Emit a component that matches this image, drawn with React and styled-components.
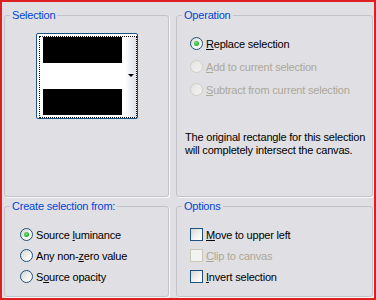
import React from 'react';
import styled, { createGlobalStyle } from 'styled-components';

const Global = createGlobalStyle`
  html, body { margin: 0; padding: 0; background: #e0dfe3; }
  body { font-family: "Liberation Sans", Arial, sans-serif; font-size: 11px; }
`;

const Dialog = styled.div`
  box-sizing: border-box;
  width: 376px;
  height: 300px;
  border: 2px solid #dd1f1f;
  background: #e0dfe3;
  padding: 7px 1px 1px 2px;
  display: grid;
  grid-template-columns: 165px 197px;
  grid-template-rows: 188px 97px;
  column-gap: 7px;
  row-gap: 3px;
  font-family: "Liberation Sans", Arial, sans-serif;
  font-size: 11px;
  letter-spacing: -0.2px;
  color: #000;
`;

const Group = styled.fieldset`
  margin: 0;
  padding: 0;
  min-width: 0;
  border: 1px solid #c3c3c9;
  border-radius: 3px;
  box-shadow: 1px 1px 0 #f7f7f9;
  display: flex;
  flex-direction: column;
`;

const Title = styled.legend`
  margin-left: 5px;
  padding: 0 2px;
  line-height: 13px;
  color: #0046d5;
`;

const Body = styled.div`
  display: flex;
  flex-direction: column;
  padding: ${p => p.$pad};
`;

const Preview = styled.div`
  align-self: center;
  margin-top: 11px;
  box-sizing: border-box;
  width: 102px;
  height: 86px;
  border: 1px solid #1c5180;
  border-radius: 2px;
  background: #fff;
  padding: 2px 0 0 2px;
`;

const Focus = styled.div`
  box-sizing: border-box;
  height: 100%;
  border: 1px dotted #000;
  display: flex;
  padding-left: 3px;
`;

const Bars = styled.div`
  width: 79px;
  display: flex;
  flex-direction: column;
`;

const Bar = styled.div`
  height: 26px;
  background: ${p => (p.$dark ? '#000' : '#fff')};
`;

const Strip = styled.div`
  margin-left: auto;
  width: 10px;
  background: linear-gradient(to right, #fbfbfd, #dfe2ec);
  display: flex;
  align-items: center;
  justify-content: center;
`;

const Arrow = styled.span`
  width: 0;
  height: 0;
  margin-top: -3px;
  border-left: 3px solid transparent;
  border-right: 3px solid transparent;
  border-top: 3px solid #000;
`;

const Option = styled.label`
  display: flex;
  align-items: center;
  gap: 3px;
  height: ${p => p.$h}px;
  color: ${p => (p.$disabled ? '#aca899' : '#000')};
  white-space: nowrap;
`;

const Radio = styled.span`
  box-sizing: border-box;
  flex: none;
  width: 13px;
  height: 13px;
  border-radius: 50%;
  border: 1px solid ${p => (p.$disabled ? '#d0cec6' : '#1c5180')};
  background: ${p =>
    p.$disabled ? 'linear-gradient(135deg, #e4e3e2, #f3f3f2)' : 'linear-gradient(135deg, #d6d6d1 0%, #f4f4f2 60%, #ffffff 100%)'};
  display: flex;
  align-items: center;
  justify-content: center;
  &::after {
    content: '';
    display: ${p => (p.$checked ? 'block' : 'none')};
    width: 5px;
    height: 5px;
    border-radius: 50%;
    background: radial-gradient(circle at 40% 40%, #7fe07f 0%, #2db52d 60%, #1f9a1f 100%);
  }
`;

const Check = styled.span`
  box-sizing: border-box;
  flex: none;
  width: 13px;
  height: 13px;
  border: 1px solid ${p => (p.$disabled ? '#cac8bb' : '#1c5180')};
  background: ${p =>
    p.$disabled ? '#f2f2f0' : 'linear-gradient(135deg, #d6d6d1 0%, #f4f4f2 60%, #ffffff 100%)'};
`;

const Key = styled.span`
  text-decoration: underline;
`;

const Info = styled.p`
  margin: 30px 0 0 8px;
  line-height: 13px;
`;

export default function App() {
  return (
    <>
      <Global />
      <Dialog>
        <Group>
          <Title>Selection</Title>
          <Preview>
            <Focus>
              <Bars>
                <Bar $dark />
                <Bar />
                <Bar $dark />
              </Bars>
              <Strip>
                <Arrow />
              </Strip>
            </Focus>
          </Preview>
        </Group>

        <Group>
          <Title>Operation</Title>
          <Body $pad="10px 0 0 13px">
            <Option $h={23}>
              <Radio $checked />
              <span><Key>R</Key>eplace selection</span>
            </Option>
            <Option $h={23} $disabled>
              <Radio $disabled />
              <span><Key>A</Key>dd to current selection</span>
            </Option>
            <Option $h={23} $disabled>
              <Radio $disabled />
              <span><Key>S</Key>ubtract from current selection</span>
            </Option>
          </Body>
          <Info>
            The original rectangle for this selection
            <br />
            will completely intersect the canvas.
          </Info>
        </Group>

        <Group>
          <Title>Create selection from:</Title>
          <Body $pad="11px 0 0 15px">
            <Option $h={21}>
              <Radio $checked />
              <span>Source <Key>l</Key>uminance</span>
            </Option>
            <Option $h={21}>
              <Radio />
              <span>Any non-<Key>z</Key>ero value</span>
            </Option>
            <Option $h={21}>
              <Radio />
              <span>S<Key>o</Key>urce opacity</span>
            </Option>
          </Body>
        </Group>

        <Group>
          <Title>Options</Title>
          <Body $pad="11px 0 0 13px">
            <Option $h={21}>
              <Check />
              <span><Key>M</Key>ove to upper left</span>
            </Option>
            <Option $h={21} $disabled>
              <Check $disabled />
              <span><Key>C</Key>lip to canvas</span>
            </Option>
            <Option $h={21}>
              <Check />
              <span><Key>I</Key>nvert selection</span>
            </Option>
          </Body>
        </Group>
      </Dialog>
    </>
  );
}
